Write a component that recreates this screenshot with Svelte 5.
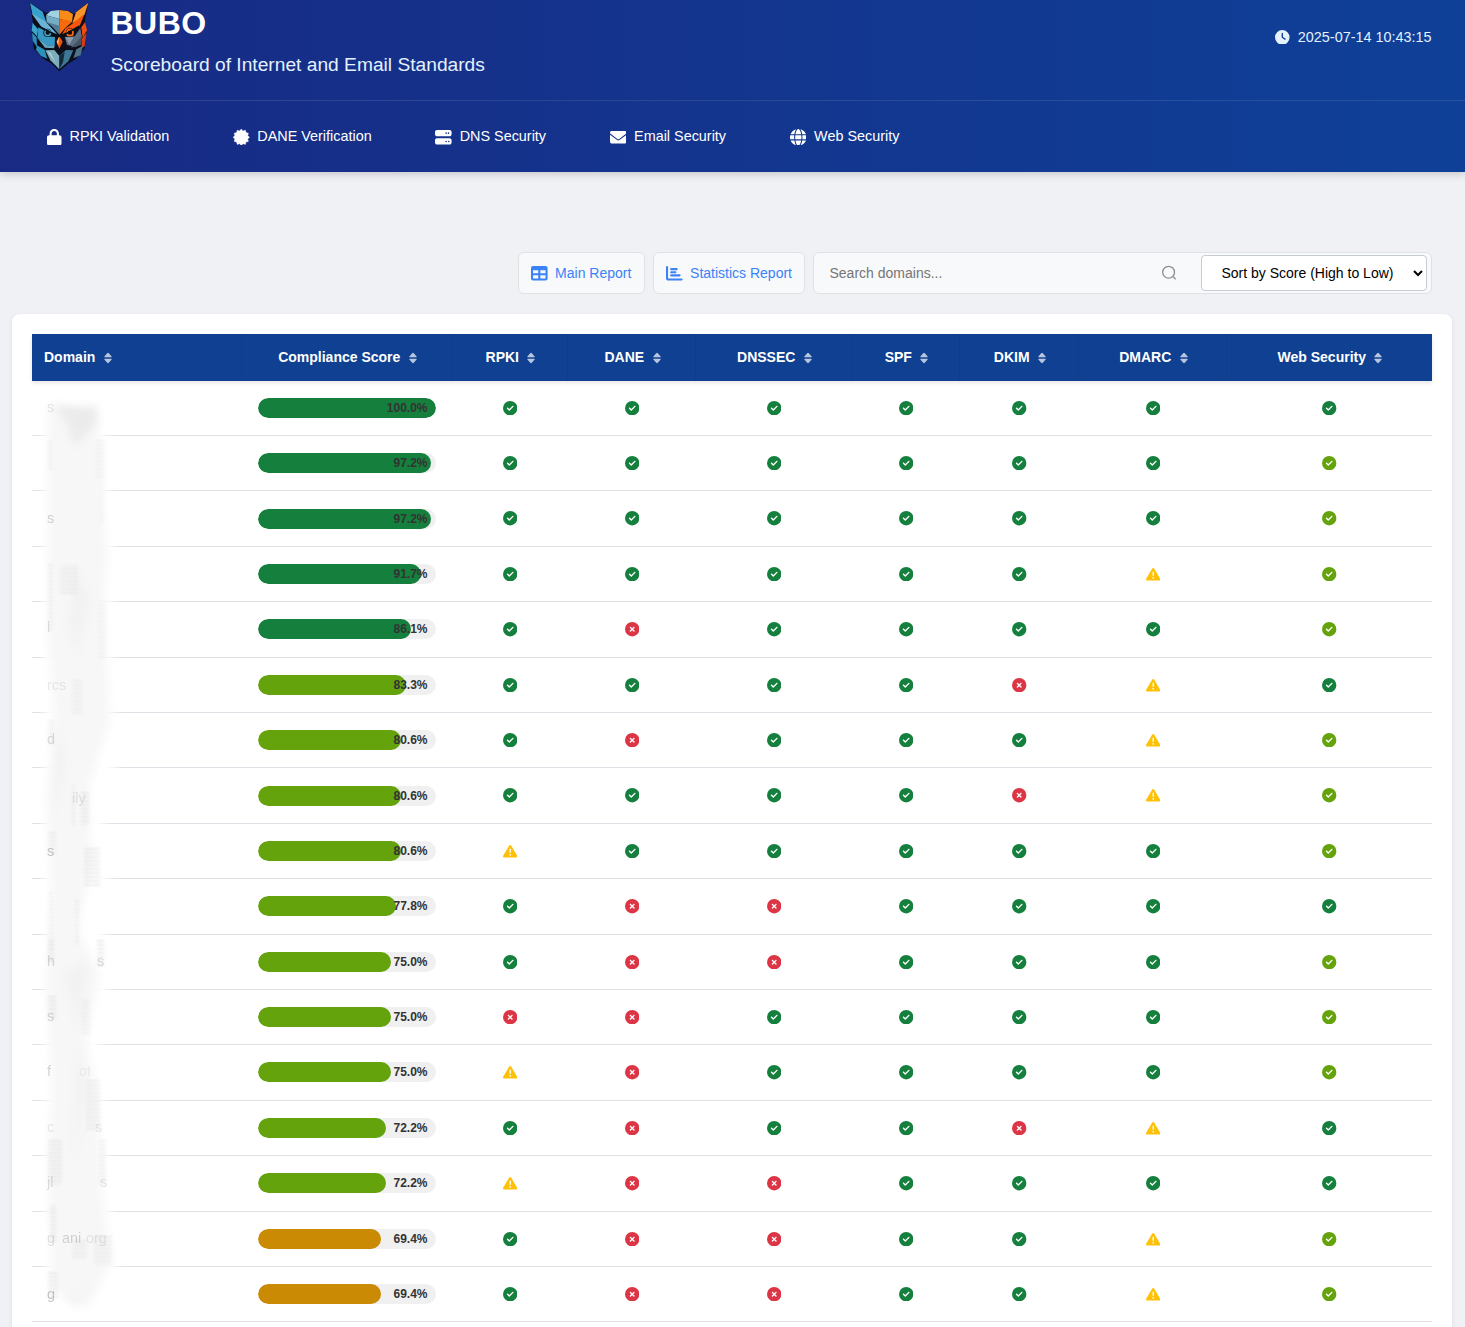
<script>
  const check = 'M256 512A256 256 0 1 0 256 0a256 256 0 1 0 0 512zM369 209L241 337c-9.4 9.4-24.6 9.4-33.9 0l-64-64c-9.4-9.4-9.4-24.6 0-33.9s24.6-9.4 33.9 0l47 47L335 175c9.4-9.4 24.6-9.4 33.9 0s9.4 24.6 0 33.9z';
  const statusPath = {
    g: check,
    l: check,
    x: 'M256 512A256 256 0 1 0 256 0a256 256 0 1 0 0 512zM175 175c9.4-9.4 24.6-9.4 33.9 0l47 47 47-47c9.4-9.4 24.6-9.4 33.9 0s9.4 24.6 0 33.9l-47 47 47 47c9.4 9.4 9.4 24.6 0 33.9s-24.6 9.4-33.9 0l-47-47-47 47c-9.4 9.4-24.6 9.4-33.9 0s-9.4-24.6 0-33.9l47-47-47-47c-9.4-9.4-9.4-24.6 0-33.9z',
    w: 'M256 32c14.2 0 27.3 7.5 34.5 19.8l216 368c7.3 12.4 7.3 27.7 .2 40.1S486.3 480 472 480H40c-14.3 0-27.6-7.7-34.7-20.1s-7-27.8 .2-40.1l216-368C228.7 39.5 241.8 32 256 32zm0 128c-13.3 0-24 10.7-24 24V296c0 13.3 10.7 24 24 24s24-10.7 24-24V184c0-13.3-10.7-24-24-24zm32 224a32 32 0 1 0 -64 0 32 32 0 1 0 64 0z'
  };
  // Twelve-point star badge
  const badge = Array.from({ length: 24 }, (_, i) => {
    const a = (i * Math.PI) / 12;
    const r = i % 2 ? 205 : 254;
    return `${256 + r * Math.sin(a)},${256 - r * Math.cos(a)}`;
  }).join(' ');
  const nav = [
    { label: 'RPKI Validation', w: 448, d: 'M144 144v48H304V144c0-44.2-35.8-80-80-80s-80 35.8-80 80zM80 192V144C80 64.5 144.5 0 224 0s144 64.5 144 144v48h16c35.3 0 64 28.7 64 64V448c0 35.3-28.7 64-64 64H64c-35.3 0-64-28.7-64-64V256c0-35.3 28.7-64 64-64H80z' },
    { label: 'DANE Verification', w: 512, d: '' },
    { label: 'DNS Security', w: 512, d: 'M64 32C28.7 32 0 60.7 0 96v64c0 35.3 28.7 64 64 64H448c35.3 0 64-28.7 64-64V96c0-35.3-28.7-64-64-64H64zm280 72a24 24 0 1 1 0 48 24 24 0 1 1 0-48zm48 24a24 24 0 1 1 48 0 24 24 0 1 1 -48 0zM64 288c-35.3 0-64 28.7-64 64v64c0 35.3 28.7 64 64 64H448c35.3 0 64-28.7 64-64V352c0-35.3-28.7-64-64-64H64zm280 72a24 24 0 1 1 0 48 24 24 0 1 1 0-48zm56 24a24 24 0 1 1 48 0 24 24 0 1 1 -48 0z' },
    { label: 'Email Security', w: 512, d: 'M48 64C21.5 64 0 85.5 0 112c0 15.1 7.1 29.3 19.2 38.4L236.8 313.6c11.4 8.5 27 8.5 38.4 0L492.8 150.4c12.1-9.1 19.2-23.3 19.2-38.4c0-26.5-21.5-48-48-48H48zM0 176V384c0 35.3 28.7 64 64 64H448c35.3 0 64-28.7 64-64V176L294.4 339.2c-22.8 17.1-54 17.1-76.8 0L0 176z' },
    { label: 'Web Security', w: 512, d: 'M352 256c0 22.2-1.2 43.6-3.3 64H163.3c-2.2-20.4-3.3-41.8-3.3-64s1.2-43.6 3.3-64H348.7c2.2 20.4 3.3 41.8 3.3 64zm28.8-64H503.9c5.3 20.5 8.1 41.9 8.1 64s-2.8 43.5-8.1 64H380.8c2.1-20.6 3.2-42 3.2-64s-1.1-43.4-3.2-64zm112.6-32H376.7c-10-63.9-29.8-117.4-55.3-151.6c78.3 20.7 142 77.5 171.9 151.6zm-149.1 0H167.7c6.1-36.4 15.5-68.6 27-94.7c10.5-23.6 22.2-40.7 33.5-51.5C239.4 3.2 248.7 0 256 0s16.6 3.2 27.8 13.8c11.3 10.8 23 27.9 33.5 51.5c11.6 26 20.9 58.2 27 94.7zm-209 0H18.6C48.6 85.9 112.2 29.1 190.6 8.4C165.1 42.6 145.3 96.1 135.3 160zM8.1 192H131.2c-2.1 20.6-3.2 42-3.2 64s1.1 43.4 3.2 64H8.1C2.8 299.5 0 278.1 0 256s2.8-43.5 8.1-64zM194.7 446.6c-11.6-26-20.9-58.2-27-94.6H344.3c-6.1 36.4-15.5 68.6-27 94.6c-10.5 23.6-22.2 40.7-33.5 51.5C272.6 508.8 263.3 512 256 512s-16.6-3.2-27.8-13.8c-11.3-10.8-23-27.9-33.5-51.5zM135.3 352c10 63.9 29.8 117.4 55.3 151.6C112.2 482.9 48.6 426.1 18.6 352H135.3zm358.1 0c-30 74.1-93.6 130.9-171.9 151.6c25.5-34.2 45.2-87.7 55.3-151.6H493.4z' }
  ];
  const columns = ['Domain', 'Compliance Score', 'RPKI', 'DANE', 'DNSSEC', 'SPF', 'DKIM', 'DMARC', 'Web Security'];
  // Status codes: g pass, l partial pass, w warning, x fail
  const rows = [
    ['100.0', 'ggggggg'], ['97.2', 'ggggggl'], ['97.2', 'ggggggl'], ['91.7', 'gggggwl'],
    ['86.1', 'gxggggl'], ['83.3', 'ggggxwg'], ['80.6', 'gxgggwl'], ['80.6', 'ggggxwl'],
    ['80.6', 'wgggggl'], ['77.8', 'gxxgggg'], ['75.0', 'gxxgggl'], ['75.0', 'xxggggl'],
    ['75.0', 'wxggggl'], ['72.2', 'gxggxwg'], ['72.2', 'wxxgggg'], ['69.4', 'gxxggwl'],
    ['69.4', 'gxxggwl']
  ];
  const tone = (s) => (s >= 85 ? 'high' : s >= 70 ? 'mid' : 'low');
  // Remnants of the redacted names: x, y, text, opacity
  const remnants = [
    [47, 412, 's', 0.14], [47, 523, 's', 0.26], [47, 632, 'l', 0.18], [47, 690, 'rcs', 0.12], [47, 744, 'd', 0.2],
    [72, 803, 'ily', 0.14], [47, 856, 's', 0.32], [47, 966, 'h', 0.22], [97, 966, 's', 0.2],
    [47, 1021, 's', 0.24], [47, 1076, 'f', 0.24], [79, 1076, 'ot', 0.08], [47, 1132, 'c', 0.12],
    [95, 1132, 's', 0.12], [47, 1187, 'jl', 0.18], [100, 1187, 's', 0.14], [47, 1243, 'g', 0.16],
    [62, 1243, 'ani', 0.24], [86, 1243, 'org', 0.12], [47, 1299, 'g', 0.32]
  ];
  // Vertical smears: x, y, width, height, opacity
  const trails = [
    [48, 440, 4, 30, 0.5], [96, 440, 9, 40, 0.5], [99, 480, 5, 45, 0.35], [48, 562, 5, 70, 0.55],
    [60, 565, 18, 30, 0.6], [72, 680, 10, 35, 0.5], [98, 600, 8, 60, 0.3], [48, 720, 6, 25, 0.5],
    [72, 785, 3, 40, 0.8], [81, 790, 8, 35, 0.8], [48, 830, 8, 25, 0.6], [84, 848, 16, 40, 0.7],
    [48, 890, 6, 60, 0.4], [75, 900, 4, 45, 0.6], [48, 940, 6, 24, 0.8], [97, 940, 7, 26, 0.8],
    [48, 994, 8, 25, 0.8], [82, 1000, 8, 36, 0.5], [86, 1080, 14, 52, 0.6], [48, 1140, 14, 45, 0.7],
    [99, 1140, 7, 45, 0.6], [50, 1205, 6, 38, 0.8], [72, 1240, 15, 20, 0.6], [94, 1235, 18, 30, 0.6],
    [48, 1270, 10, 28, 0.7]
  ];
</script>

<div class="page">
  <header>
    <div class="top">
      <svg class="owl" viewBox="0 0 240 240">
        <path fill="#0c0f1a" d="M29 8L80 40L92 34L119 29L148 34L160 42L205 7L193 72L200 98L194 145L168 178L146 190L118 214L94 190L72 178L42 147L35 100L40 75Z" />
        <path fill="#38a0cd" d="M30 9L68 35L80 70L110 101L69 84L37 41Z" />
        <path fill="#6bb3d3" d="M34 39L78 66L112 104L65 82Z" />
        <path fill="#a0d2e2" d="M78 46L92 33L118 30L118 57Z" />
        <path fill="#75acc5" d="M78 46L118 57L118 103L99 81L80 66Z" />
        <path fill="#527d9a" d="M83 67L118 77L118 103L98 82Z" />
        <path fill="#f78b17" d="M118 30L144 33L159 43L156 66L118 57Z" />
        <path fill="#f66a0b" d="M118 57L158 64L136 84L118 104Z" />
        <path fill="#f6932c" d="M205 8L168 37L157 70L174 60L194 43Z" />
        <path fill="#f8540b" d="M155 73L194 41L178 80L126 103L137 85Z" />
        <path fill="#3ca5cb" d="M38 68L54 88L51 109L35 92Z" />
        <path fill="#2b8dbe" d="M36 98L50 112L51 142L38 122Z" />
        <path fill="#3899c5" d="M55 82L78 94L75 109L105 111L104 138L82 137L52 113Z" />
        <path fill="#69a7bf" d="M52 113L83 137L104 137L102 145L75 143Z" />
        <path fill="#f34b10" d="M195 67L201 91L188 113L184 82Z" />
        <path fill="#d83b14" d="M200 98L194 139L185 144L185 116Z" />
        <path fill="#5c6f82" d="M134 111L164 109L181 84L186 111L169 141L141 135Z" />
        <path fill="#8b9cab" d="M136 112L161 111L148 134Z" />
        <path fill="#455565" d="M185 108L184 135L152 143L169 127Z" />
        <path fill="#2a91b8" d="M51 136L74 149L82 176L63 168L48 149Z" />
        <path fill="#507287" d="M189 137L169 148L160 175L182 166Z" />
        <path fill="#f3540a" d="M118 109L128 125L118 146L110 125Z" />
        <path fill="#ffbe75" d="M117 111L110 125L115 137Z" />
        <path fill="#7badbc" d="M76 151L103 150L118 168L118 208L91 181Z" />
        <path fill="#b4ccd2" d="M81 153L92 158L108 191Z" />
        <path fill="#3d7997" d="M118 168L138 150L160 151L145 184L118 208Z" />
        <path fill="#17293d" d="M118 168L134 156L129 187L118 208Z" />
        <circle cx="82" cy="98" r="12" fill="#07131e" />
        <circle cx="83" cy="98" r="8.5" fill="none" stroke="#55abc9" stroke-width="4" />
        <circle cx="150" cy="98" r="13" fill="#150b08" />
        <circle cx="150" cy="98" r="9" fill="none" stroke="#fa6b17" stroke-width="5" />
        <path stroke="#08101a" stroke-width="5" fill="none" d="M56 79L100 101L118 108L138 101L179 78" />
      </svg>
      <div class="brand">
        <h1>BUBO</h1>
        <p>Scoreboard of Internet and Email Standards</p>
      </div>
      <div class="stamp">
        <svg width="14.6" height="14.6" viewBox="0 0 512 512"><path fill-rule="evenodd" fill="currentColor" d="M256 0a256 256 0 1 1 0 512A256 256 0 1 1 256 0zM232 120V256c0 8 4 15.5 10.7 20l96 64c11 7.4 25.9 4.4 33.3-6.7s4.4-25.9-6.7-33.3L280 243.2V120c0-13.3-10.7-24-24-24s-24 10.7-24 24z" /></svg>
        <span>2025-07-14 10:43:15</span>
      </div>
    </div>
    <nav>
      {#each nav as item}
        <a href="#top">
          <svg width={(item.w / 512) * 16.6} height="16.6" viewBox="0 0 {item.w} 512" fill="currentColor">
            {#if item.d}<path d={item.d} />{:else}<polygon points={badge} stroke="currentColor" stroke-width="12" stroke-linejoin="round" />{/if}
          </svg>
          <span>{item.label}</span>
        </a>
      {/each}
    </nav>
  </header>

  <div class="tools">
    <a class="btn" href="#main">
      <svg width="16.6" height="16.6" viewBox="0 0 512 512" fill="currentColor"><path fill-rule="evenodd" d="M64 32H448a64 64 0 0 1 64 64V416a64 64 0 0 1-64 64H64a64 64 0 0 1-64-64V96A64 64 0 0 1 64 32zM64 160V256H224V160zM288 160V256H448V160zM64 320V416H224V320zM288 320V416H448V320z" /></svg>
      <span>Main Report</span>
    </a>
    <a class="btn" href="#stats">
      <svg width="16.6" height="16.6" viewBox="0 0 512 512" fill="none" stroke="currentColor" stroke-width="64" stroke-linecap="round"><path d="M32 64V400Q32 448 80 448H480M160 128H330M160 224H290M160 320H420" /></svg>
      <span>Statistics Report</span>
    </a>
    <div class="search">
      <input type="text" placeholder="Search domains..." />
      <svg width="16" height="16" viewBox="0 0 16 16" fill="none" stroke="#8b8f94" stroke-width="1.3"><circle cx="7.6" cy="7.2" r="5.9" /><path d="M11.9 11.5L14.7 14.2" /></svg>
      <select><option>Sort by Score (High to Low)</option></select>
    </div>
  </div>

  <main>
    <div class="table">
      <div class="row head">
        {#each columns as c}
          <div class="th">
            <span>{c}</span>
            <svg width="8" height="12" viewBox="0 0 9 12" preserveAspectRatio="none" fill="#fff" fill-opacity=".7"><path d="M1 5.3Q0 5.3 .4 4.4L3.6 1.2Q4.5 .5 5.4 1.2L8.6 4.4Q9 5.3 8 5.3ZM1 6.7Q0 6.7 .4 7.6L3.6 10.8Q4.5 11.5 5.4 10.8L8.6 7.6Q9 6.7 8 6.7Z" /></svg>
          </div>
        {/each}
      </div>
      {#each rows as [score, states]}
        <div class="row body">
          <div></div>
          <div class="score">
            <div class="track">
              <div class="fill {tone(+score)}" style="width: {score}%"></div>
              <b>{score}%</b>
            </div>
          </div>
          {#each states as s}
            <div class="cell">
              <svg class="st {s}" width="14.4" height="14.4" viewBox="0 0 512 512"><path fill="currentColor" d={statusPath[s]} /></svg>
            </div>
          {/each}
        </div>
      {/each}
    </div>
  </main>

  <svg class="smudge" width="140" height="1327" viewBox="0 0 140 1327">
    <defs>
      <filter id="soft" x="-30%" y="-5%" width="160%" height="110%"><feGaussianBlur stdDeviation="6 3" /></filter>
      <filter id="mist" x="-60%" y="-60%" width="220%" height="220%"><feGaussianBlur stdDeviation="4" /></filter>
      <filter id="edge" x="-100%" y="-40%" width="300%" height="180%"><feGaussianBlur stdDeviation="1.8 .9" /></filter>
      <pattern id="weave" width="4" height="4" patternUnits="userSpaceOnUse"><rect width="4" height="2" fill="#c9cbcc" /></pattern>
    </defs>
    <path filter="url(#soft)" fill="#fff" d="M44 398H104L108 500L114 560L108 650L116 760L104 820L108 880L104 960L110 1010L98 1050L106 1150L110 1220L116 1270L104 1310H48Z" />
    <g filter="url(#mist)" fill="#f7f7f7">
      <path d="M48 405H98L102 500L108 555L104 600L110 720L88 790L92 860L78 930L100 975L86 1035L98 1100L102 1190L112 1260L88 1308L52 1290L48 1160L52 1090L46 980L52 900L46 800L54 720L48 640Z" />
      <path fill="#ebebeb" d="M54 404Q76 408 96 408L98 421L74 446L68 425Z" />
      <path fill="#f2f2f2" d="M74 565L90 600L78 655L68 625ZM55 720L66 765L54 815ZM63 975L80 1030L88 960ZM77 1050L87 1090L74 1160ZM62 1295Q92 1300 92 1280L76 1308Z" />
    </g>
    <g filter="url(#edge)">
      {#each trails as [x, y, w, h, o]}
        <rect {x} {y} width={w} height={h} fill="url(#weave)" opacity={o * 0.5} />
      {/each}
    </g>
    {#each remnants as [x, y, t, o]}
      <text {x} {y} fill="#555" opacity={o}>{t}</text>
    {/each}
  </svg>
</div>

<style>
  :global(body) { margin: 0; background: #f0f1f5; overflow: hidden; }
  .page { position: relative; height: 1327px; overflow: hidden; font-family: "Liberation Sans", Arial, sans-serif; background: #f0f1f5; }
  header { height: 172px; background: linear-gradient(90deg, #182a84, #0f4098); box-shadow: 0 2px 8px rgba(0, 0, 0, .18); }
  .top { height: 101px; box-sizing: border-box; display: flex; padding: 0 33.5px 0 20px; border-bottom: 1px solid rgba(255, 255, 255, .1); }
  .owl { width: 80px; height: 80px; margin-right: 10.5px; }
  h1 { margin: 4px 0 0; font-size: 32px; line-height: 38px; color: #fff; letter-spacing: .5px; }
  p { margin: 11px 0 0; font-size: 19.2px; line-height: 23px; color: #e3f2fd; }
  .stamp { margin-left: auto; height: 73px; display: flex; align-items: center; gap: 8px; font-size: 14.4px; color: #e3f2fd; }
  .stamp svg { margin-top: 1px; }
  nav { display: flex; gap: 63.75px; padding-left: 47.3px; height: 70px; align-items: center; }
  nav a { display: flex; align-items: center; gap: 7.7px; color: #fff; text-decoration: none; font-size: 14.4px; line-height: 20px; }
  nav svg { margin-top: 2px; }
  .tools { display: flex; gap: 8px; justify-content: flex-end; padding: 80px 33px 0 0; height: 42px; }
  .btn, .search { box-sizing: border-box; height: 42px; border: 1px solid #dfe1e3; border-radius: 6px; background: #f8f9fb; display: flex; align-items: center; }
  .btn { padding: 0 12px; gap: 7.5px; color: #3b82f6; font-size: 14px; text-decoration: none; }
  .btn:first-child { padding-right: 12.6px; }
  .search { width: 619px; padding-right: 4px; }
  input { border: 0; outline: 0; background: none; padding: 0 0 0 15.5px; width: 332px; box-sizing: border-box; font: 14px "Liberation Sans", sans-serif; }
  input::placeholder { color: #757575; }
  .search svg { margin: 0 24px 0 15px; }
  select { box-sizing: border-box; width: 226px; height: 36px; border: 1px solid #c6ccd3; border-radius: 4px; background: #fff; padding: 0 0 0 15.5px; font: 14px "Liberation Sans", sans-serif; color: #000; }
  main { margin: 20px 13px 0 12px; padding: 20px; height: 1050px; background: #fff; border-radius: 8px; box-shadow: 0 2px 4px rgba(0, 0, 0, .08); }
  .table { width: 1400px; }
  .row { display: grid; grid-template-columns: 210px 210px 116px 128px 156px 108px 119px 148px 205px; }
  .head { height: 46.7px; background: #0f4091; box-shadow: 0 2px 4px rgba(0, 0, 0, .1); }
  .th { display: flex; align-items: center; justify-content: center; gap: 8.5px; padding-left: 2px; color: #fff; font-weight: bold; font-size: 14px; border-right: 1px solid rgba(0, 0, 0, .04); }
  .th:first-child { justify-content: flex-start; padding-left: 12px; }
  .th:last-child { border: 0; padding-left: 1px; }
  .th svg { margin-top: 2px; }
  .body { height: 55.4px; box-sizing: border-box; border-bottom: 1px solid #e0e1e7; }
  .score { padding: 17.1px 16.2px 0 15.8px; }
  .track { position: relative; height: 20px; border-radius: 10px; background: #f0f0f0; overflow: hidden; }
  .fill { height: 20px; border-radius: 10px; }
  .high { background: #15803d; }
  .mid { background: #65a30d; }
  .low { background: #ca8a04; }
  .track b { position: absolute; right: 8.3px; top: 0; font-size: 12px; line-height: 20px; color: #333; }
  .cell { display: flex; align-items: center; justify-content: center; }
  .st { display: block; }
  .g { color: #15803d; }
  .l { color: #65a30d; }
  .x { color: #dc3545; }
  .w { color: #ffc107; }
  .smudge { position: absolute; left: 0; top: 0; pointer-events: none; font-size: 14.4px; }
</style>
